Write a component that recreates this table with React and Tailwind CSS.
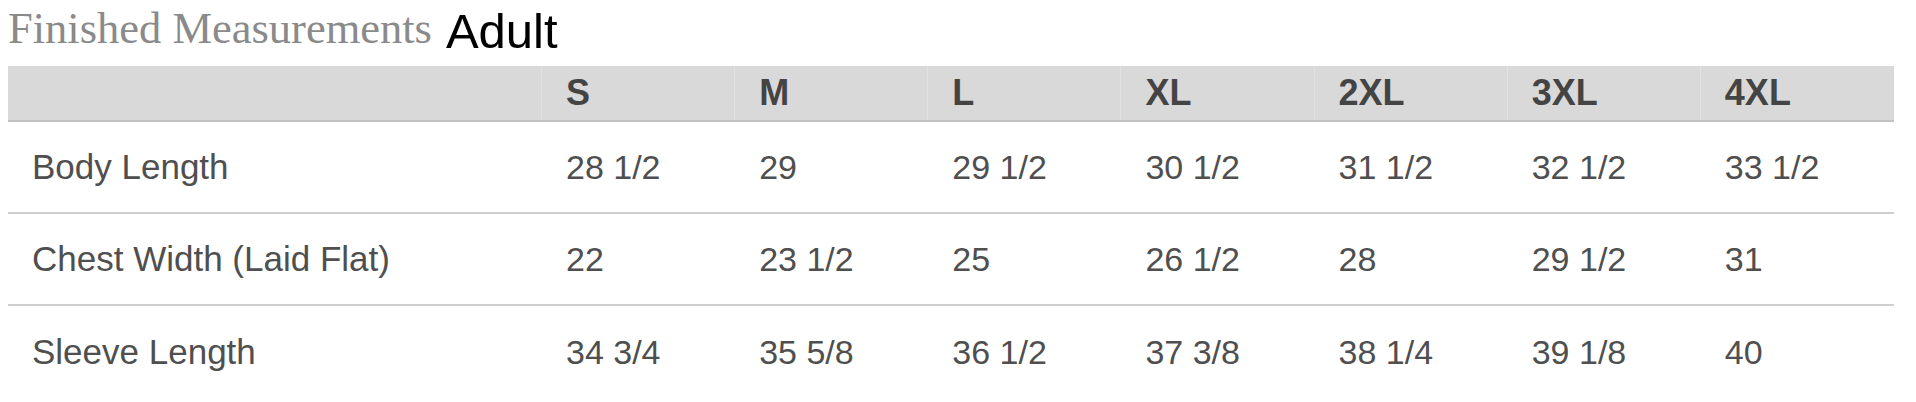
import React from 'react';

const sizes = ['S', 'M', 'L', 'XL', '2XL', '3XL', '4XL'];

const rows = [
    { label: 'Body Length', values: ['28 1/2', '29', '29 1/2', '30 1/2', '31 1/2', '32 1/2', '33 1/2'] },
    { label: 'Chest Width (Laid Flat)', values: ['22', '23 1/2', '25', '26 1/2', '28', '29 1/2', '31'] },
    { label: 'Sleeve Length', values: ['34 3/4', '35 5/8', '36 1/2', '37 3/8', '38 1/4', '39 1/8', '40'] },
];

const App = () => {
    return (
        <div className="w-[1916px] h-[402px] bg-white overflow-hidden">
            {/* Title */}
            <div className="flex items-start pl-[8px] h-[66px]">
                <span className="mt-[6px] text-[44.5px] leading-[44px] text-[#8a8a8a] font-['Liberation_Serif',serif] whitespace-nowrap">
                    Finished Measurements
                </span>
                <span className="mt-[7px] ml-[14px] text-[49px] leading-[49px] text-black font-['Liberation_Sans',Arial,sans-serif]">
                    Adult
                </span>
            </div>

            {/* Table */}
            <div className="ml-[8px] w-[1886px] font-['Liberation_Sans',Arial,sans-serif] text-[34px]">
                {/* Header */}
                <div className="grid grid-cols-[534px_repeat(7,1fr)] h-[56px] bg-[#d9d9d9] border-b-2 border-[#c2c2c2]">
                    <div className="border-r border-[#e2e2e2]" />
                    {sizes.map((s, i) => (
                        <div
                            key={s}
                            className={`flex items-center pl-[24px] text-[36px] font-bold text-[#444] ${i < sizes.length - 1 ? 'border-r border-[#e2e2e2]' : ''}`}
                        >
                            {s}
                        </div>
                    ))}
                </div>

                {/* Rows */}
                {rows.map((row, r) => (
                    <div
                        key={row.label}
                        className={`grid grid-cols-[534px_repeat(7,1fr)] h-[92px] text-[#4f4f4f] ${r < rows.length - 1 ? 'border-b-2 border-[#cfcfcf]' : ''}`}
                    >
                        <div className="flex items-center pl-[24px] text-[35px] whitespace-nowrap">{row.label}</div>
                        {row.values.map((v, i) => (
                            <div key={i} className="flex items-center pl-[24px] whitespace-nowrap">
                                {v}
                            </div>
                        ))}
                    </div>
                ))}
            </div>
        </div>
    );
};

export default App;
